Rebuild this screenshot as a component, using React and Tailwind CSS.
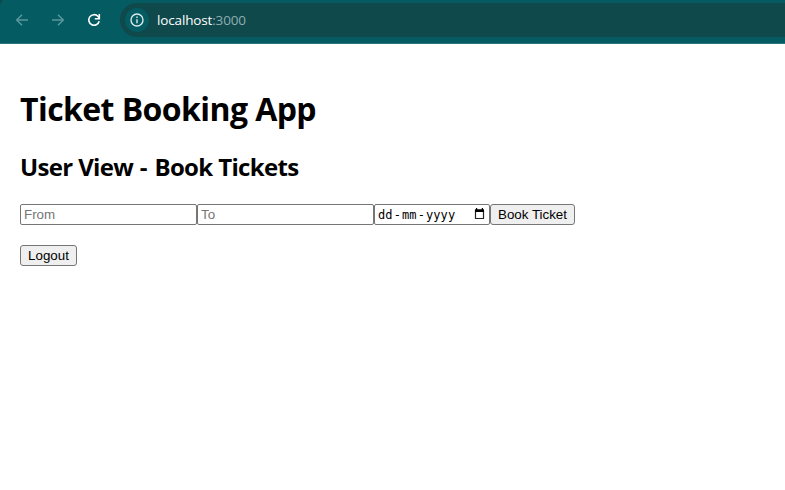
function Toolbar() {
  return (
    <header className="relative flex h-11 items-start border-b border-[#2c7480] bg-[#045b62]">
      <svg className="absolute top-0 left-0 h-[6px] w-[3px]" viewBox="0 0 3 6">
        <path d="M0 0h3Q.5 2 0 6z" fill="#0f494c" />
      </svg>
      <div className="flex h-10 w-[120px] shrink-0 items-center text-[#5b979d]">
        <svg className="ml-[14px] h-4 w-4" viewBox="0 0 16 16" fill="none" stroke="currentColor" strokeWidth="1.5">
          <path d="M14 8H3M8 2.7 2.7 8 8 13.3" />
        </svg>
        <svg className="ml-5 h-4 w-4" viewBox="0 0 16 16" fill="none" stroke="currentColor" strokeWidth="1.5">
          <path d="M2 8h11M8 2.7 13.3 8 8 13.3" />
        </svg>
        <svg className="ml-5 h-4 w-4 text-white" viewBox="0 0 16 16" fill="none" stroke="currentColor" strokeWidth="1.6">
          <path d="M13.2 9.3A5.3 5.3 0 1 1 11.9 4.3L13.2 5.8" />
          <path d="M13.3 2v4.7H8.8" />
        </svg>
      </div>
      <div className="mt-[3px] flex h-[34px] flex-1 items-center rounded-l-full bg-[#0f494c] pl-[5px]">
        <div className="flex h-6 w-6 items-center justify-center rounded-full bg-[#045b62]">
          <svg className="h-[14px] w-[14px] text-[#dbe9ea]" viewBox="0 0 14 14" fill="none" stroke="currentColor" strokeWidth="1.4">
            <circle cx="7" cy="7" r="6" />
            <path d="M7 6.2v4M7 3.5v1.5" />
          </svg>
        </div>
        <div className="ml-2 font-['Open_Sans',sans-serif] text-[13.5px] tracking-[-0.15px] text-white">
          localhost<span className="text-[#8faeb1]">:3000</span>
        </div>
      </div>
    </header>
  );
}

const field =
  "h-[21px] w-[177px] rounded-[2px] border border-[#767676] bg-white px-[3px] text-[13.333px] text-black outline-none placeholder:text-[#757575]";
const button =
  "h-[21px] rounded-[3px] border border-[#767676] bg-[#efefef] text-center text-[13.333px] leading-[19px] text-black";

export default function App() {
  return (
    <div className="h-[490px] overflow-hidden bg-white font-['Liberation_Sans',Arial,sans-serif] text-black">
      <Toolbar />
      <main className="px-5 pt-[43px]">
        <h1 className="h-[43px] whitespace-nowrap font-['Open_Sans',sans-serif] text-[32px] leading-[43px] font-bold tracking-[-0.58px]">
          Ticket Booking App
        </h1>
        <h2 className="mt-[21px] h-8 whitespace-nowrap font-['Open_Sans',sans-serif] text-2xl leading-8 font-bold tracking-[-0.65px]">
          User View <span className="mr-[2px] ml-[1px]">-</span> Book Tickets
        </h2>
        <form className="mt-[21px] flex" onSubmit={(e) => e.preventDefault()}>
          <input className={field} placeholder="From" />
          <input className={field} placeholder="To" />
          <div className="flex h-[21px] w-[116px] items-center justify-between rounded-[2px] border border-[#767676] pr-1 pl-[3px]">
            <span className="pt-[2px] font-['DejaVu_Sans_Mono',monospace] text-[12px] leading-[17px] tracking-[0.1px]">
              dd<span className="mx-px">-</span>mm<span className="mx-px">-</span>yyyy
            </span>
            <svg className="mb-px h-3 w-[11px]" viewBox="0 0 11 12">
              <path d="M1.5 2.5h8v8h-8z" fill="none" stroke="#222" strokeWidth="1.2" />
              <path d="M1 1.2h9V4H1zM2 0h1.2v2H2zM7.8 0H9v2H7.8z" />
            </svg>
          </div>
          <button className={`${button} w-[85px]`}>Book Ticket</button>
        </form>
        <button className={`${button} mt-5 block w-[57px]`}>Logout</button>
      </main>
    </div>
  );
}
